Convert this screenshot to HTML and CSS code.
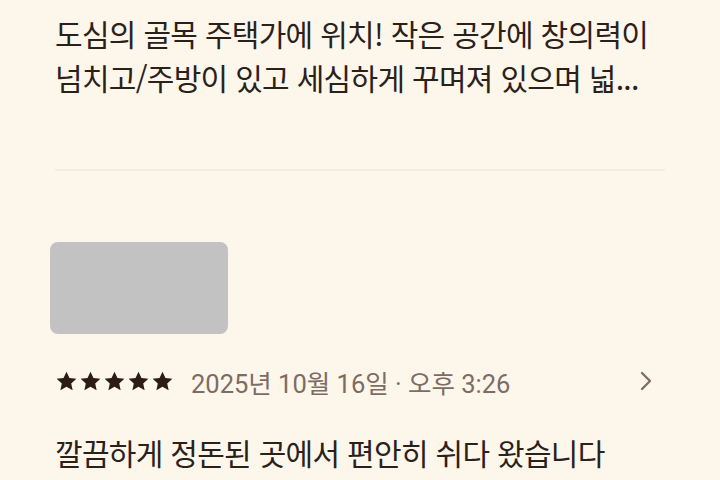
FILE: index.html
```html
<!DOCTYPE html>
<html lang="ko">
<head>
    <meta charset="utf-8">
    <meta name="viewport" content="width=device-width, initial-scale=1">
    <title>후기</title>
    <link rel="stylesheet" href="styles.css">
</head>
<body>

    <div class="review">
        <p class="review-text">도심의 골목 주택가에 위치! 작은 공간에 창의력이<br>넘치고/주방이 있고 세심하게 꾸며져 있으며 넓...</p>
    </div>

    <div class="divider"></div>

    <div class="review">
        <div class="photo"></div>
        <div class="review-meta">
            <span class="stars">
                <svg viewBox="0 0 24 24"><path d="M12 1.8l3.1 6.6 7.2.8-5.4 4.9 1.5 7.1L12 17.6l-6.4 3.6 1.5-7.1-5.4-4.9 7.2-.8z"/></svg>
                <svg viewBox="0 0 24 24"><path d="M12 1.8l3.1 6.6 7.2.8-5.4 4.9 1.5 7.1L12 17.6l-6.4 3.6 1.5-7.1-5.4-4.9 7.2-.8z"/></svg>
                <svg viewBox="0 0 24 24"><path d="M12 1.8l3.1 6.6 7.2.8-5.4 4.9 1.5 7.1L12 17.6l-6.4 3.6 1.5-7.1-5.4-4.9 7.2-.8z"/></svg>
                <svg viewBox="0 0 24 24"><path d="M12 1.8l3.1 6.6 7.2.8-5.4 4.9 1.5 7.1L12 17.6l-6.4 3.6 1.5-7.1-5.4-4.9 7.2-.8z"/></svg>
                <svg viewBox="0 0 24 24"><path d="M12 1.8l3.1 6.6 7.2.8-5.4 4.9 1.5 7.1L12 17.6l-6.4 3.6 1.5-7.1-5.4-4.9 7.2-.8z"/></svg>
            </span>
            <span class="date">2025년 10월 16일 · 오후 3:26</span>
            <svg class="chevron" viewBox="0 0 24 24"><path d="M8 4l8 8-8 8"/></svg>
        </div>
        <p class="review-text">깔끔하게 정돈된 곳에서 편안히 쉬다 왔습니다</p>
    </div>

</body>
</html>
```

FILE: styles.css
```css
body {
    margin: 0;
    font-family: "Noto Sans CJK KR", "Noto Sans", sans-serif;
    color: #2a211b;
    background-color: #fdf6ea;
    overflow: hidden;
}

.review {
    padding: 0 55px;
}

.review-text {
    margin: 0;
    font-size: 30px;
    line-height: 44px;
    letter-spacing: -0.7px;
    white-space: nowrap;
}

.review:first-child .review-text {
    padding-top: 11px;
}

.divider {
    height: 2px;
    background-color: #f3ebdf;
    margin: 70px 55px 0;
}

.photo {
    width: 178px;
    height: 92px;
    margin: 71px 0 0 -5px;
    background-color: #c2c2c2;
    border-radius: 8px;
}

.review-meta {
    display: flex;
    align-items: center;
    height: 40px;
    margin: 27px 0 29px;
}

.stars {
    display: flex;
    gap: 1px;
}

.stars svg {
    width: 23px;
    height: 23px;
    fill: #2b1d16;
}

.date {
    margin-left: 17px;
    font-family: Roboto, "Noto Sans CJK KR", sans-serif;
    font-size: 25.5px;
    color: #7c6c64;
}

.chevron {
    margin-left: auto;
    margin-right: 7px;
    width: 24px;
    height: 24px;
    fill: none;
    stroke: #7c6c64;
    stroke-width: 2.3;
    stroke-linecap: round;
    stroke-linejoin: round;
}
```
